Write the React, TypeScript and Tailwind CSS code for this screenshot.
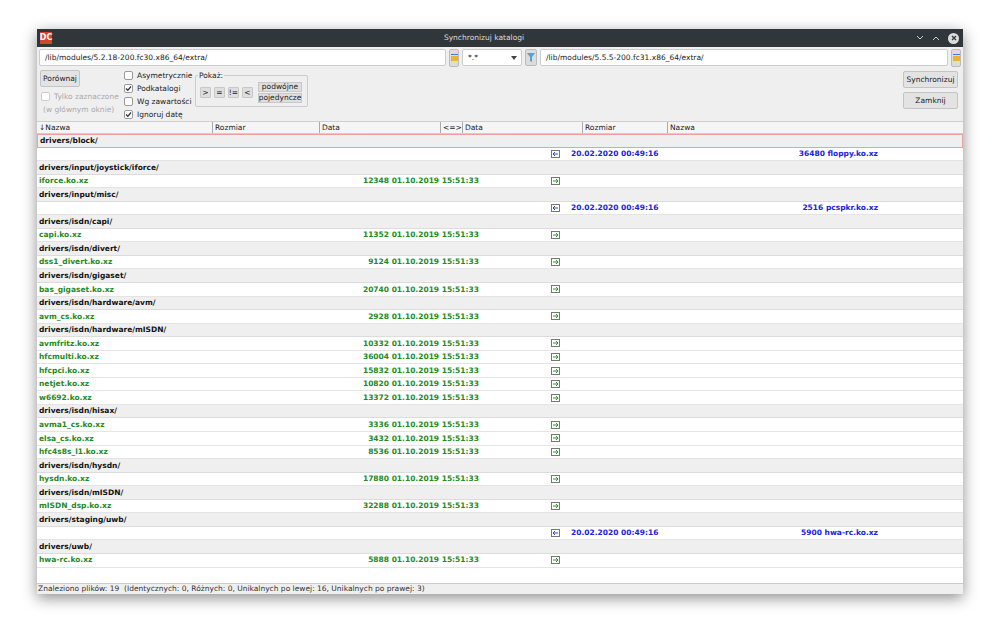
import React from "react";

type Row = { kind: "dir"; name: string } | { kind: "L"; name: string; size: string } | { kind: "R"; name: string; size: string };

const rows: Row[] = [
  { kind: "dir", name: "drivers/block/" },
  { kind: "R", name: "floppy.ko.xz", size: "36480" },
  { kind: "dir", name: "drivers/input/joystick/iforce/" },
  { kind: "L", name: "iforce.ko.xz", size: "12348" },
  { kind: "dir", name: "drivers/input/misc/" },
  { kind: "R", name: "pcspkr.ko.xz", size: "2516" },
  { kind: "dir", name: "drivers/isdn/capi/" },
  { kind: "L", name: "capi.ko.xz", size: "11352" },
  { kind: "dir", name: "drivers/isdn/divert/" },
  { kind: "L", name: "dss1_divert.ko.xz", size: "9124" },
  { kind: "dir", name: "drivers/isdn/gigaset/" },
  { kind: "L", name: "bas_gigaset.ko.xz", size: "20740" },
  { kind: "dir", name: "drivers/isdn/hardware/avm/" },
  { kind: "L", name: "avm_cs.ko.xz", size: "2928" },
  { kind: "dir", name: "drivers/isdn/hardware/mISDN/" },
  { kind: "L", name: "avmfritz.ko.xz", size: "10332" },
  { kind: "L", name: "hfcmulti.ko.xz", size: "36004" },
  { kind: "L", name: "hfcpci.ko.xz", size: "15832" },
  { kind: "L", name: "netjet.ko.xz", size: "10820" },
  { kind: "L", name: "w6692.ko.xz", size: "13372" },
  { kind: "dir", name: "drivers/isdn/hisax/" },
  { kind: "L", name: "avma1_cs.ko.xz", size: "3336" },
  { kind: "L", name: "elsa_cs.ko.xz", size: "3432" },
  { kind: "L", name: "hfc4s8s_l1.ko.xz", size: "8536" },
  { kind: "dir", name: "drivers/isdn/hysdn/" },
  { kind: "L", name: "hysdn.ko.xz", size: "17880" },
  { kind: "dir", name: "drivers/isdn/mISDN/" },
  { kind: "L", name: "mISDN_dsp.ko.xz", size: "32288" },
  { kind: "dir", name: "drivers/staging/uwb/" },
  { kind: "R", name: "hwa-rc.ko.xz", size: "5900" },
  { kind: "dir", name: "drivers/uwb/" },
  { kind: "L", name: "hwa-rc.ko.xz", size: "5888" },
];

const Arrow = ({ left }: { left: boolean }) => (
  <svg width="9" height="8" viewBox="0 0 9 8" className="shrink-0">
    <rect x="0.5" y="0.5" width="8" height="7" fill="#fff" stroke="#777" />
    {left ? (
      <path d="M2 4h5M2 4l2-2M2 4l2 2" stroke="#2a50c8" strokeWidth="1" fill="none" />
    ) : (
      <path d="M2 4h5M7 4l-2-2M7 4l-2 2" stroke="#2a9a2a" strokeWidth="1" fill="none" />
    )}
  </svg>
);

const Cb = ({ checked, dis }: { checked?: boolean; dis?: boolean }) => (
  <span className={`shrink-0 w-[9px] h-[9px] border rounded-[2px] bg-white flex items-center justify-center ${dis ? "border-[#ccc]" : "border-[#999]"}`}>
    {checked && (
      <svg width="7" height="7" viewBox="0 0 7 7"><path d="M1 3.5l1.8 1.8L6 1.5" stroke="#333" strokeWidth="1.3" fill="none" /></svg>
    )}
  </span>
);

const FolderBtn = () => (
  <div className="w-[10px] h-[18px] bg-[#dcdcdc] border border-[#bbb] rounded-[2px] flex flex-col items-center justify-center">
    <div className="w-[7px] h-[1.5px] bg-[#3a7bd5]" />
    <div className="w-[7px] h-[5px] bg-[#f0b030] mt-[1px]" />
  </div>
);

export default function App() {
  return (
    <div className="w-[1000px] h-[637px] bg-white relative" style={{ fontFamily: '"DejaVu Sans", sans-serif' }}>
      <div className="absolute left-[37px] top-[29px] w-[926px] h-[565px] flex flex-col bg-[#efefef] shadow-[0_4px_14px_rgba(0,0,0,0.45)]">
        {/* title */}
        <div className="h-[18px] bg-[#31363b] flex items-center px-[3px] text-[#dcdcdc] text-[7.5px] relative">
          <div className="w-[12px] h-[12px] bg-[#d8432c] text-white text-[8px] font-bold flex items-center justify-center leading-none">DC</div>
          <div className="flex-1 text-center">Synchronizuj katalogi</div>
          <div className="flex items-center gap-[8px] pr-[1px]">
            <svg width="8" height="6" viewBox="0 0 8 6"><path d="M1 1l3 3 3-3" stroke="#ccc" fill="none" /></svg>
            <svg width="8" height="6" viewBox="0 0 8 6"><path d="M1 5l3-3 3 3" stroke="#ccc" fill="none" /></svg>
            <div className="w-[11px] h-[11px] rounded-full bg-[#dcdcdc] flex items-center justify-center">
              <svg width="6" height="6" viewBox="0 0 6 6"><path d="M1 1l4 4M5 1l-4 4" stroke="#31363b" strokeWidth="1.3" /></svg>
            </div>
          </div>
        </div>
        {/* paths */}
        <div className="h-[21px] flex items-center gap-[3px] px-[2px] text-[7.5px] text-[#222]">
          <div className="w-[407px] h-[17px] bg-white border border-[#ccc] rounded-[2px] flex items-center px-[5px]">/lib/modules/5.2.18-200.fc30.x86_64/extra/</div>
          <FolderBtn />
          <div className="w-[60px] h-[17px] bg-white border border-[#ccc] rounded-[2px] flex items-center justify-between pl-[5px] pr-[4px]">
            <span>*.*</span>
            <svg width="6" height="4" viewBox="0 0 6 4"><path d="M0 0h6L3 4z" fill="#444" /></svg>
          </div>
          <div className="w-[12px] h-[17px] bg-[#dcdcdc] border border-[#bbb] rounded-[2px] flex items-center justify-center">
            <svg width="8" height="9" viewBox="0 0 8 9"><path d="M0 0h8L5 4v5L3 8V4z" fill="#5aa0d8" /></svg>
          </div>
          <div className="flex-1 h-[17px] bg-white border border-[#ccc] rounded-[2px] flex items-center px-[5px]">/lib/modules/5.5.5-200.fc31.x86_64/extra/</div>
          <FolderBtn />
        </div>
        {/* controls */}
        <div className="h-[53px] flex px-[3px] pt-[2px] text-[7.5px] text-[#222] whitespace-nowrap leading-none">
          <div className="flex flex-col w-[84px]">
            <div className="w-[40px] h-[17px] bg-[#e3e3e3] border border-[#c4c4c4] rounded-[2px] flex items-center justify-center">Porównaj</div>
            <div className="flex items-center gap-[4px] mt-[5px] pl-[1px] text-[#aaa]"><Cb dis />Tylko zaznaczone</div>
            <div className="mt-[5px] text-[#aaa] pl-[3px]">(w głównym oknie)</div>
          </div>
          <div className="flex flex-col gap-[4px] w-[71px] pt-[1px]">
            <div className="flex items-center gap-[4px]"><Cb />Asymetrycznie</div>
            <div className="flex items-center gap-[4px]"><Cb checked />Podkatalogi</div>
            <div className="flex items-center gap-[4px]"><Cb />Wg zawartości</div>
            <div className="flex items-center gap-[4px]"><Cb checked />Ignoruj datę</div>
          </div>
          <div className="relative w-[113px] h-[32px] border border-[#ccc] rounded-[2px] mt-[5px] flex items-center gap-[3px] pl-[4px]">
            <span className="absolute left-[2px] top-[-4px] bg-[#efefef] px-[1px]">Pokaż:</span>
            {[">", "=", "!=", "<"].map((s) => (
              <div key={s} className="w-[11px] h-[11px] bg-[#dedede] border border-[#c8c8c8] rounded-[1px] flex items-center justify-center mt-[3px]">{s}</div>
            ))}
            <div className="flex flex-col gap-[1px] ml-[2px] mt-[2px]">
              <div className="w-[44px] h-[10px] bg-[#dedede] border border-[#c8c8c8] flex items-center justify-center">podwójne</div>
              <div className="w-[44px] h-[10px] bg-[#dedede] border border-[#c8c8c8] flex items-center justify-center">pojedyncze</div>
            </div>
          </div>
          <div className="flex-1" />
          <div className="flex flex-col gap-[4px] pt-[1px] pr-[2px]">
            <div className="w-[55px] h-[17px] bg-[#e3e3e3] border border-[#c4c4c4] rounded-[2px] flex items-center justify-center">Synchronizuj</div>
            <div className="w-[55px] h-[17px] bg-[#e3e3e3] border border-[#c4c4c4] rounded-[2px] flex items-center justify-center">Zamknij</div>
          </div>
        </div>
        {/* header */}
        <div className="h-[13px] flex text-[7.5px] text-[#222] bg-[#f5f5f5] border-y border-[#cfcfcf] items-center">
          <div className="w-[176px] border-r border-[#aaa] pl-[2px]">↓Nazwa</div>
          <div className="w-[107px] border-r border-[#aaa] pl-[2px]">Rozmiar</div>
          <div className="w-[121px] border-r border-[#aaa] pl-[2px]">Data</div>
          <div className="w-[22px] border-r border-[#aaa] pl-[2px]">&lt;=&gt;</div>
          <div className="w-[120px] border-r border-[#aaa] pl-[2px]">Data</div>
          <div className="w-[85px] border-r border-[#aaa] pl-[2px]">Rozmiar</div>
          <div className="flex-1 pl-[2px]">Nazwa</div>
        </div>
        {/* list */}
        <div className="flex-1 bg-white flex flex-col text-[7.5px] font-bold leading-none">
          {rows.map((r, i) => {
            if (r.kind === "dir")
              return (
                <div key={i} className={`h-[13.56px] flex items-center pl-[2px] text-[#111] bg-[#efefef] border-b border-[#dcdcdc] ${i === 0 ? "border border-[#e8a0a0]" : ""}`}>{r.name}</div>
              );
            if (r.kind === "L")
              return (
                <div key={i} className="h-[13.56px] flex items-center border-b border-[#e4e4e4] text-[#238a1e]">
                  <div className="w-[178px] pl-[2px]">{r.name}</div>
                  <div className="w-[264px] text-right">{r.size} 01.10.2019 15:51:33</div>
                  <div className="w-[72px]" />
                  <Arrow left={false} />
                </div>
              );
            return (
              <div key={i} className="h-[13.56px] flex items-center border-b border-[#e4e4e4] text-[#2020e0]">
                <div className="w-[514px]" />
                <Arrow left />
                <div className="w-[11px]" />
                <div className="w-[120px]">20.02.2020 00:49:16</div>
                <div className="w-[187px] text-right">{r.size} {r.name}</div>
              </div>
            );
          })}
        </div>
        {/* status */}
        <div className="h-[11px] flex items-center text-[7.5px] text-[#333] pl-[1px] border-t border-[#ccc]">
          Znaleziono plików: 19&nbsp; (Identycznych: 0, Różnych: 0, Unikalnych po lewej: 16, Unikalnych po prawej: 3)
        </div>
      </div>
    </div>
  );
}
